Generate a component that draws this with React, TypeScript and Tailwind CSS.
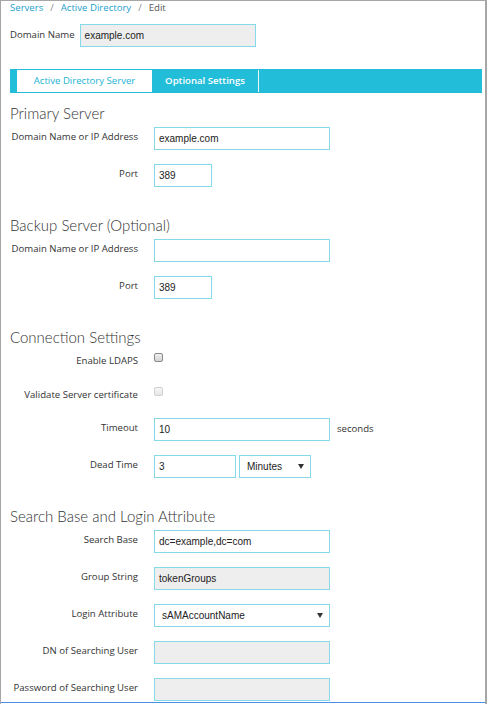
import React from 'react';

const labelFont = { fontFamily: '"Open Sans", "Noto Sans", sans-serif' };
const inputFont = { fontFamily: '"Liberation Sans", Arial, sans-serif' };
const headFont = { fontFamily: 'Lato, "Open Sans", sans-serif' };

function Heading({ children, top }: { children: React.ReactNode; top: string }) {
  return (
    <h2 className={`${top} mb-[4px] text-[15px] leading-[20px] font-light text-[#333]`} style={headFont}>
      {children}
    </h2>
  );
}

function Row({ label, children, h = 'h-[23px]' }: { label: string; children: React.ReactNode; h?: string }) {
  return (
    <div className={`flex items-start gap-[16px] mb-[14px] ${h}`}>
      <div className="w-[128px] shrink-0 text-right text-[9.6px] leading-[19px] text-[#333]" style={labelFont}>
        {label}
      </div>
      <div className="flex items-center gap-[3px] h-full">{children}</div>
    </div>
  );
}

function TextBox({ value = '', w = 'w-[176px]', gray = false }: { value?: string; w?: string; gray?: boolean }) {
  return (
    <div
      className={`${w} h-[23px] border border-[#86d9e8] flex items-center pl-[4px] text-[10px] text-[#222] ${gray ? 'bg-[#eeeeee]' : 'bg-white'}`}
      style={inputFont}
    >
      {value}
    </div>
  );
}

function Select({ value, w }: { value: string; w: string }) {
  return (
    <div
      className={`${w} h-[23px] border border-[#86d9e8] bg-white flex items-center justify-between pl-[7px] pr-[6px] text-[10px] text-[#222]`}
      style={inputFont}
    >
      <span>{value}</span>
      <svg width="6" height="5" viewBox="0 0 6 5">
        <path d="M0 0 L6 0 L3 5 Z" fill="#333" />
      </svg>
    </div>
  );
}

function Check({ disabled = false }: { disabled?: boolean }) {
  return (
    <span
      className={`mt-[2px] block w-[9px] h-[9px] rounded-[2px] border ${
        disabled
          ? 'border-[#cfcfcf] bg-gradient-to-b from-[#f7f7f7] to-[#e6e6e6]'
          : 'border-[#8a8a8a] bg-gradient-to-b from-[#f0f0f0] to-[#d4d4d4]'
      }`}
    />
  );
}

export default function App() {
  return (
    <div className="w-[487px] h-[704px] bg-white border-l border-t border-r-2 border-[#a6a6a6] overflow-hidden">
      <div className="h-[702px] border-b border-[#4a8fe0] pl-[9px] overflow-hidden">
        {/* breadcrumb */}
        <div className="text-[9.6px] leading-[13px] text-[#555]" style={labelFont}>
          <span className="text-[#1f9fcf]">Servers</span>
          <span className="text-[#888] px-[7px]">/</span>
          <span className="text-[#1f9fcf]">Active Directory</span>
          <span className="text-[#888] px-[7px]">/</span>
          <span>Edit</span>
        </div>

        {/* domain name */}
        <div className="mt-[10px] flex items-center gap-[5px]">
          <span className="text-[9.6px] text-[#333]" style={labelFont}>Domain Name</span>
          <TextBox value="example.com" gray />
        </div>

        {/* tabs */}
        <div className="mt-[22px] w-[472px] h-[24px] bg-[#22bdd8] flex pl-[7px] pt-[1px] pb-[1px]" style={labelFont}>
          <div className="w-[135px] bg-white flex items-center justify-center text-[9.6px] text-[#23b3d4]">
            Active Directory Server
          </div>
          <div className="w-[107px] flex items-center justify-center text-[9.6px] font-semibold text-white border-r border-[#e8f8fb]">
            Optional Settings
          </div>
        </div>

        <Heading top="mt-[10px]">Primary Server</Heading>
        <Row label="Domain Name or IP Address">
          <TextBox value="example.com" />
        </Row>
        <Row label="Port">
          <TextBox value="389" w="w-[58px]" />
        </Row>

        <Heading top="mt-[28px]">Backup Server (Optional)</Heading>
        <Row label="Domain Name or IP Address">
          <TextBox />
        </Row>
        <Row label="Port">
          <TextBox value="389" w="w-[58px]" />
        </Row>

        <Heading top="mt-[28px]">Connection Settings</Heading>
        <Row label="Enable LDAPS" h="h-[20px]">
          <div className="self-start"><Check /></div>
        </Row>
        <Row label="Validate Server certificate" h="h-[19px]">
          <div className="self-start"><Check disabled /></div>
        </Row>
        <Row label="Timeout">
          <TextBox value="10" />
          <span className="ml-[4px] text-[9.6px] text-[#333]" style={labelFont}>seconds</span>
        </Row>
        <Row label="Dead Time">
          <TextBox value="3" w="w-[82px]" />
          <Select value="Minutes" w="w-[72px]" />
        </Row>

        <Heading top="mt-[28px]">Search Base and Login Attribute</Heading>
        <Row label="Search Base">
          <TextBox value="dc=example,dc=com" />
        </Row>
        <Row label="Group String">
          <TextBox value="tokenGroups" gray />
        </Row>
        <Row label="Login Attribute">
          <Select value="sAMAccountName" w="w-[176px]" />
        </Row>
        <Row label="DN of Searching User">
          <TextBox gray />
        </Row>
        <Row label="Password of Searching User">
          <TextBox gray />
        </Row>
      </div>
    </div>
  );
}
